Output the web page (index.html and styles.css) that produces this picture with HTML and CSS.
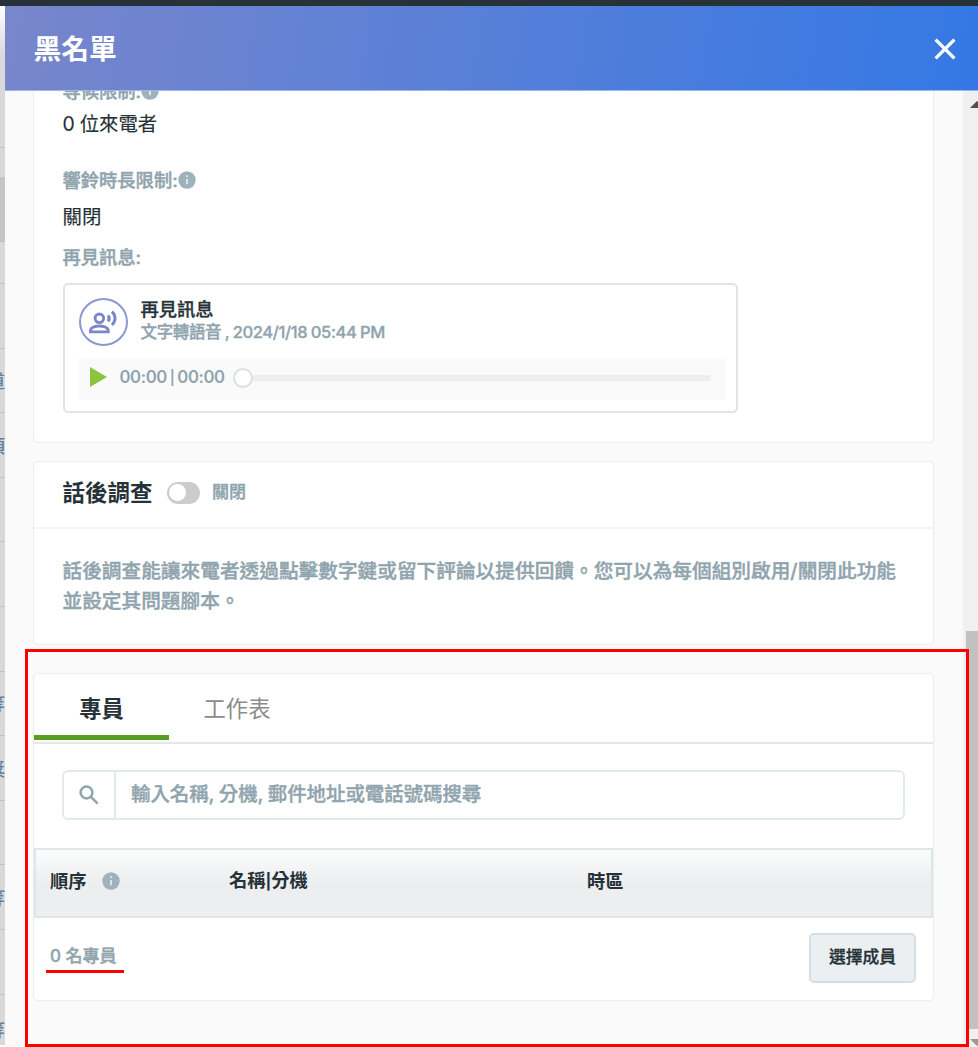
FILE: index.html
```html
<!DOCTYPE html>
<html lang="zh-Hant">
<head>
<meta charset="utf-8">
<title>黑名單</title>
<link rel="stylesheet" href="styles.css">
</head>
<body>
<div class="page">
  <div class="topbar"></div>
  <div class="main">
    <div class="backdrop">
      <div class="row row-first"></div>
      <div class="row row-gap"></div>
      <div class="row row-dark"></div>
      <div class="row row-short"></div>
      <div class="row"></div>
      <div class="row"><span>道</span></div>
      <div class="row"><span>項</span></div>
      <div class="row"></div>
      <div class="row"></div>
      <div class="row"></div>
      <div class="row"><span>等</span></div>
      <div class="row"><span>獎</span></div>
      <div class="row"></div>
      <div class="row"><span>等</span></div>
      <div class="row"></div>
      <div class="row row-last"><span>等</span></div>
    </div>
    <div class="drawer">
      <header class="header">
        <h1 class="title">黑名單</h1>
        <svg class="close" viewBox="0 0 22 22"><path d="M1.6 1.6 20.4 20.4M20.4 1.6 1.6 20.4"/></svg>
      </header>
      <div class="body">
        <div class="content">
          <section class="card card-settings">
            <div class="label">等候限制:<svg class="info" viewBox="0 0 18 18"><circle cx="9" cy="9" r="8.7"/><path d="M9 4.3v1.8M9 8v5.2"/></svg></div>
            <div class="value">0 位來電者</div>
            <div class="label label-ring">響鈴時長限制:<svg class="info" viewBox="0 0 18 18"><circle cx="9" cy="9" r="8.7"/><path d="M9 4.3v1.8M9 8v5.2"/></svg></div>
            <div class="value">關閉</div>
            <div class="label label-bye">再見訊息:</div>
            <div class="audio">
              <div class="audio-head">
                <span class="avatar"><svg viewBox="0 0 28 24"><circle cx="10.5" cy="8" r="4.1"/><path d="M2 21v-1.2c0-3.2 5-4.5 8.500-4.500s8.500 1.300 8.500 4.500V21z"/><path class="wave" d="M18.800 5.100c1.400 1.700 1.400 4.100 0 5.800M22.600 1.600c4 3.700 4 9.100 0 12.800"/></svg></span>
                <div class="audio-text">
                  <div class="audio-name">再見訊息</div>
                  <div class="audio-meta">文字轉語音 , 2024/1/18 05:44 PM</div>
                </div>
              </div>
              <div class="player">
                <svg class="play" viewBox="0 0 17 20"><path d="M0 0 17 10 0 20z"/></svg>
                <span class="time">00:00 <span class="bar">|</span> 00:00</span>
                <span class="knob"></span>
                <span class="track"></span>
              </div>
            </div>
          </section>
          <section class="card card-survey">
            <div class="survey-head">
              <h2>話後調查</h2>
              <span class="toggle"><span class="toggle-dot"></span></span>
              <span class="state">關閉</span>
            </div>
            <p class="survey-text">話後調查能讓來電者透過點擊數字鍵或留下評論以提供回饋。您可以為每個組別啟用/關閉此功能<br>並設定其問題腳本。</p>
          </section>
          <section class="card card-agents">
            <nav class="tabs">
              <span class="tab tab-active">專員</span>
              <span class="tab">工作表</span>
            </nav>
            <div class="search">
              <span class="search-icon"><svg viewBox="0 0 20 20"><circle cx="7.500" cy="7.500" r="5.900"/><path d="m11.900 11.900 6.800 6.800"/></svg></span>
              <span class="placeholder">輸入名稱, 分機, 郵件地址或電話號碼搜尋</span>
            </div>
            <div class="thead">
              <span class="col-order">順序<svg class="info" viewBox="0 0 18 18"><circle cx="9" cy="9" r="8.700"/><path d="M9 4.300v1.800M9 8v5.200"/></svg></span>
              <span>名稱<span class="bar">|</span>分機</span>
              <span>時區</span>
            </div>
            <div class="tfoot">
              <span class="count">0 名專員</span>
              <button class="button">選擇成員</button>
            </div>
          </section>
        </div>
        <div class="scrollbar">
          <svg class="arrow" viewBox="0 0 8 7"><path d="M0 7 7 0 14 7z"/></svg>
          <div class="thumb"></div>
          <svg class="arrow arrow-down" viewBox="0 0 8 7"><path d="M0 0h14L7 7z"/></svg>
        </div>
      </div>
    </div>
  </div>
  <div class="mark-box"></div>
  <div class="mark-line"></div>
</div>
</body>
</html>
```
FILE: styles.css
```css
* { box-sizing: border-box; }
body { margin: 0; background: #fff; font-family: Inter, "Noto Sans CJK TC", sans-serif; color: #263238; }
h1, h2, p { margin: 0; }
.page { position: relative; width: 978px; height: 1047px; overflow: hidden; display: flex; flex-direction: column; }
.topbar { height: 6px; flex: none; background: #263238; }
.main { display: flex; flex: 1; min-height: 0; }
.backdrop { width: 5px; height: 1039px; overflow: hidden; background: #d9d9d9; }
.row { height: 64.600px; border-bottom: 1px solid #b9c3c8; display: flex; justify-content: flex-end; align-items: center; }
.row span { flex: none; font-size: 18px; font-weight: 500; color: #64809a; }
.row-first { height: 142px; background: linear-gradient(#fff, #d9d9d9 50px); }
.row-gap { height: 29px; border: 0; }
.row-dark { height: 65px; background: #c5c5c7; }
.row-short { height: 42px; }
.row-last { height: 70px; }
.drawer { flex: 1; min-width: 0; display: flex; flex-direction: column; background: #fafafa; }
.header { height: 85px; flex: none; display: flex; align-items: center; justify-content: space-between; padding: 1px 22px 0 28.500px; background: linear-gradient(100deg, #7986cb, #3478e5); border-bottom: 1px solid #9db7ee; }
.title { padding-top: 1px; font-size: 27.800px; line-height: 40px; font-weight: 700; color: #fff; }
.close { width: 22px; height: 22px; fill: none; stroke: #fff; stroke-width: 3.400; }
.body { flex: 1; min-height: 0; overflow: hidden; display: flex; }
.content { width: 958px; padding: 0 29px 0 28px; }
.card { border: 1px solid #eceff1; border-radius: 5px; background: #fff; box-shadow: 0 0 1px #eceff1; }
.card-settings { height: 372px; margin-top: -20px; padding: 5px 29px 0 28.500px; }
.label { height: 28px; display: flex; align-items: center; font-size: 18.300px; line-height: 28px; font-weight: 500; color: #90a4ae; -webkit-text-stroke: .45px #90a4ae; }
.value { height: 28px; margin-top: 5px; font-size: 19.400px; line-height: 28px; word-spacing: -.5px; -webkit-text-stroke: .15px #263238; }
.label-ring { margin-top: 28px; }
.label-ring + .value { margin-top: 9px; }
.label-bye { margin-top: 12px; }
.info { width: 18px; height: 18px; fill: #9fb2bb; stroke: none; }
.info path { stroke: #dce4e8; stroke-width: 2; }
.audio { width: 675px; height: 130px; margin-top: 12px; border: 2px solid #e3e3e3; border-radius: 5px; padding: 13px 11px 0 14px; }
.audio-head { display: flex; height: 60px; }
.avatar { width: 49px; height: 48px; border: 2px solid #8c97d6; border-radius: 50%; display: flex; align-items: center; justify-content: center; }
.avatar svg { width: 30px; height: 25px; fill: none; stroke: #7986cb; stroke-width: 2.800; }
.audio-text { margin: -1px 0 0 13px; }
.audio-name { font-size: 18.300px; line-height: 24px; font-weight: 500; -webkit-text-stroke: .3px #263238; }
.audio-meta { font-size: 16.500px; line-height: 22px; font-weight: 500; letter-spacing: -.35px; word-spacing: -.6px; color: #90a4ae; white-space: nowrap; -webkit-text-stroke: .35px #90a4ae; }
.player { height: 42px; background: #fafafa; display: flex; align-items: center; padding: 0 15px 4px 11px; }
.play { width: 17px; height: 20px; flex: none; fill: #8bc53f; }
.time { width: 126px; flex: none; padding-left: 13px; font-size: 16.700px; line-height: 24px; font-weight: 600; letter-spacing: -.4px; word-spacing: -.9px; color: #90a4ae; white-space: nowrap; }
.bar { font-size: .85em; }
.knob { width: 20px; height: 20px; margin-top: 2px; flex: none; border: 2px solid #dcdfe1; border-radius: 50%; background: #fff; }
.track { flex: 1; height: 6px; margin-top: 2px; background: #eceeef; }
.card-survey { height: 184px; margin-top: 18px; }
.survey-head { height: 67px; display: flex; align-items: center; padding: 0 28.500px 3px; border-bottom: 2px solid #f3f4f5; }
.survey-head h2 { font-size: 22.500px; line-height: 32px; font-weight: 700; }
.toggle { width: 33px; height: 22px; margin-left: 14.500px; padding: 2px; border-radius: 11px; background: #ccc; }
.toggle-dot { display: block; width: 17px; height: 17px; border-radius: 50%; background: #fff; }
.state { margin-left: 12px; padding-bottom: 2px; font-size: 17px; line-height: 24px; font-weight: 500; color: #90a4ae; -webkit-text-stroke: .45px #90a4ae; }
.survey-text { padding: 28px 0 0 28.500px; font-size: 19.680px; line-height: 29.500px; font-weight: 500; color: #90a4ae; white-space: nowrap; -webkit-text-stroke: .4px #90a4ae; }
.card-agents { height: 328px; margin-top: 28px; }
.tabs { height: 70px; display: flex; border-bottom: 2px solid #e6e6e6; }
.tab { height: 66px; width: 135px; text-align: center; font-size: 22.300px; line-height: 69px; color: #8c8c8c; }
.tab + .tab { width: 136px; }
.tab-active { color: #263238; font-weight: 700; border-bottom: 5px solid #5c9d24; }
.search { height: 50px; margin: 26px 28px 28px; display: flex; border: 2px solid #e3eaed; border-radius: 6px; }
.search-icon { width: 52px; border-right: 2px solid #e3eaed; display: flex; align-items: center; justify-content: center; }
.search-icon svg { width: 20px; height: 20px; fill: none; stroke: #90a4ae; stroke-width: 2.500; }
.placeholder { padding-left: 15px; font-size: 19.500px; line-height: 45px; font-weight: 500; letter-spacing: -.1px; word-spacing: -.5px; color: #90a4ae; -webkit-text-stroke: .4px #90a4ae; }
.thead { height: 70px; display: grid; grid-template-columns: 179px 358px 1fr; align-items: center; padding: 0 0 4px 14px; border: 2px solid #dee6e9; background: linear-gradient(#fcfcfc, #eceeef 50%, #eceeef); font-size: 18.300px; line-height: 28px; font-weight: 700; }
.col-order { display: flex; align-items: center; }
.col-order .info { margin-left: 15px; }
.tfoot { height: 79px; display: flex; align-items: center; justify-content: space-between; padding: 0 17px 0 16px; }
.count { padding-bottom: 3px; font-size: 17px; line-height: 26px; font-weight: 500; color: #90a4ae; -webkit-text-stroke: .4px #90a4ae; }
.button { width: 107px; height: 50px; padding: 0 0 3px; border: 2px solid #d5dfe3; border-radius: 5px; background: #eceff1; font: 500 16.800px "Noto Sans CJK TC", sans-serif; color: #263238; -webkit-text-stroke: .3px #263238; }
.scrollbar { width: 15px; padding-top: 10px; background: #f0f0f0; display: flex; flex-direction: column; align-items: flex-end; }
.arrow { width: 8px; height: 7px; flex: none; fill: #505050; }
.thumb { width: 12px; height: 398px; margin-top: 523px; flex: none; background: #c1c1c1; }
.arrow-down { margin-top: 10px; fill: #999; }
.mark-box { position: absolute; left: 25px; top: 649px; width: 944px; height: 398px; border: 3px solid #f00; }
.mark-line { position: absolute; left: 46px; top: 970px; width: 78px; height: 3px; background: #f00; }
```
